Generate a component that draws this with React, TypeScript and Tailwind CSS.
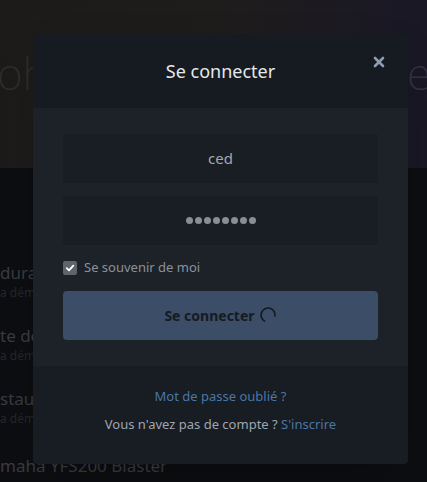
export default function App() {
  const items = [
    { title: "durant", sub: "a démarrage" },
    { title: "te de", sub: "a démarrage" },
    { title: "staura", sub: "a démarrage" },
  ];
  return (
    <div
      className="relative w-[427px] h-[482px] overflow-hidden bg-[#0d0e11]"
      style={{ fontFamily: '"Noto Sans", "Open Sans", sans-serif' }}
    >
      {/* page behind the dialog */}
      <div className="h-[168px] bg-gradient-to-r from-[#1d1b1a] via-[#1f1d1b] to-[#1a1726] flex items-start justify-between pt-[40px]">
        <span className="text-[44px] font-extralight text-[#2f2d2b] -ml-[3px]">oh</span>
        <span className="text-[44px] font-extralight text-[#34323f] -mr-[4px]">e</span>
      </div>
      <div className="flex flex-col gap-[23px] pt-[94px]">
        {items.map((it) => (
          <div key={it.title} className="flex flex-col">
            <span className="text-[17px] text-[#3a3c41] leading-[22px]">{it.title}</span>
            <span className="text-[12px] text-[#25272b] leading-[18px]">{it.sub}</span>
          </div>
        ))}
      </div>
      <div className="absolute left-0 top-[453px] text-[17px] text-[#3a3c41]">maha YFS200 Blaster</div>

      {/* dialog */}
      <div className="absolute left-[33px] top-[33px] w-[375px] rounded-[4px] overflow-hidden shadow-2xl">
        <div className="relative h-[75px] bg-[#161b22] flex items-center justify-center">
          <h2 className="text-[18px] text-[#e6e8eb] pt-[2px]">Se connecter</h2>
          <button className="absolute right-[22px] top-[22px] w-[14px] h-[14px] flex items-center justify-center">
            <svg width="12" height="12" viewBox="0 0 12 12">
              <path d="M2 2 L10 10 M10 2 L2 10" stroke="#8e9bb0" strokeWidth="2.6" strokeLinecap="round" />
            </svg>
          </button>
        </div>
        <div className="bg-[#1d2128] px-[30px] pt-[26px] pb-[26px] flex flex-col">
          <div className="h-[49px] bg-[#191d24] rounded-[3px] flex items-center justify-center text-[15px] text-[#a3a7ae]">
            ced
          </div>
          <div className="mt-[13px] h-[49px] bg-[#191d24] rounded-[3px] flex items-center justify-center gap-[2px]">
            {Array.from({ length: 8 }).map((_, i) => (
              <span key={i} className="w-[7px] h-[7px] rounded-full bg-[#8a8d92]" />
            ))}
          </div>
          <label className="mt-[13px] flex items-center gap-[7px]">
            <span className="w-[14px] h-[14px] rounded-[2px] bg-[#5f646c] flex items-center justify-center">
              <svg width="10" height="10" viewBox="0 0 10 10">
                <path d="M1.8 5.2 L4 7.3 L8.3 2.6" stroke="#ffffff" strokeWidth="1.8" fill="none" strokeLinecap="round" strokeLinejoin="round" />
              </svg>
            </span>
            <span className="text-[13px] text-[#8b929c]">Se souvenir de moi</span>
          </label>
          <button className="mt-[13px] h-[49px] rounded-[4px] bg-[#3b4d67] flex items-center justify-center gap-[4px]">
            <span className="text-[14px] font-bold text-[#161b22]">Se connecter</span>
            <svg width="18" height="18" viewBox="0 0 18 18">
              <path d="M5.5 15.06 A7 7 0 1 1 16 10" stroke="#161b22" strokeWidth="1.7" fill="none" strokeLinecap="round" />
            </svg>
          </button>
        </div>
        <div className="bg-[#181c23] h-[98px] flex flex-col items-center pt-[21px] gap-[9px] text-[13px]">
          <a className="text-[#4a77a6]">Mot de passe oublié ?</a>
          <p className="text-[#9ea6b1]">
            Vous n'avez pas de compte ? <a className="text-[#4a77a6]">S'inscrire</a>
          </p>
        </div>
      </div>
    </div>
  );
}
